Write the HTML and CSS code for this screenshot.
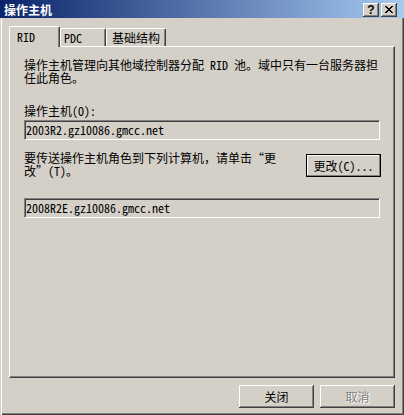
FILE: index.html
```html
<!DOCTYPE html>
<html lang="zh-CN">
<head>
    <meta charset="UTF-8">
    <title>操作主机</title>
    <link rel="stylesheet" href="styles.css">
</head>
<body>
    <div class="window">
        <div class="titlebar">
            <span class="title">操作主机</span>
            <div class="caption-buttons">
                <span class="cap-btn help">?</span>
                <span class="cap-btn close">
                    <svg width="8" height="7" viewBox="0 0 8 7">
                        <path d="M0 0h2v1h1v1h2v-1h1v-1h2v1h-1v1h-1v1h-1v1h1v1h1v1h1v1h-2v-1h-1v-1h-2v1h-1v1h-2v-1h1v-1h1v-1h1v-1h-1v-1h-1z" fill="#000"/>
                    </svg>
                </span>
            </div>
        </div>

        <div class="client">
            <div class="tabs">
                <div class="tab tab-rid active">RID</div>
                <div class="tab tab-pdc">PDC</div>
                <div class="tab tab-infra">基础结构</div>
            </div>

            <div class="panel">
                <p class="desc">操作主机管理向其他域控制器分配 RID 池。域中只有一台服务器担<br>任此角色。</p>

                <div class="label">操作主机(O):</div>
                <div class="field">2003R2.gz10086.gmcc.net</div>

                <div class="transfer">
                    <p class="desc">要传送操作主机角色到下列计算机，请单击“更<br>改”(T)。</p>
                    <button class="btn default">更改(C)...</button>
                </div>

                <div class="field field-target">2008R2E.gz10086.gmcc.net</div>
            </div>

            <div class="footer">
                <button class="btn">关闭</button>
                <button class="btn" disabled>取消</button>
            </div>
        </div>
    </div>
</body>
</html>
```

FILE: styles.css
```css
body {
    margin: 0;
    background: #d4d0c8;
    font-family: "Noto Sans Mono CJK SC", "Noto Sans CJK SC", sans-serif;
    font-size: 12px;
    color: #000;
}

.window {
    width: 404px;
    height: 415px;
    box-sizing: border-box;
    background: #d4d0c8;
    box-shadow: inset 1px 0 0 #d4d0c8, inset 2px 0 0 #fff,
                inset -1px -1px 0 #404040, inset -2px -2px 0 #808080;
    display: flex;
    flex-direction: column;
}

/* barra de título */
.titlebar {
    height: 18px;
    background: linear-gradient(to right, #0a246a, #a6caf0);
    display: flex;
    justify-content: space-between;
    padding: 0 7px 0 4px;
}

.title {
    color: #fff;
    font-weight: bold;
    line-height: 19px;
}

.caption-buttons {
    display: flex;
    gap: 2px;
    margin-top: 3px;
}

.cap-btn {
    width: 16px;
    height: 14px;
    box-sizing: border-box;
    background: #d4d0c8;
    box-shadow: inset -1px -1px 0 #404040, inset 1px 1px 0 #fff, inset -2px -2px 0 #808080;
    display: flex;
    align-items: center;
    justify-content: center;
}

.cap-btn.help {
    font-family: "Liberation Sans", sans-serif;
    font-weight: bold;
    font-size: 12px;
    line-height: 12px;
    padding-bottom: 1px;
}

.cap-btn.close svg {
    margin-bottom: 1px;
}

/* área cliente */
.client {
    flex: 1;
    padding: 8px 0 0 9px;
    display: flex;
    flex-direction: column;
}

.tabs {
    display: flex;
    align-items: flex-end;
    height: 20px;
}

.tab {
    box-sizing: border-box;
    height: 18px;
    padding-top: 2px;
    line-height: 13px;
    border-top: 1px solid #fff;
    border-left: 1px solid #fff;
    border-right: 1px solid #404040;
    border-radius: 2px 2px 0 0;
    box-shadow: inset -1px 0 0 #808080;
    background: #d4d0c8;
}

.tab.active {
    height: 21px;
    margin-bottom: -1px;
    padding-top: 3px;
    position: relative;
    z-index: 1;
}

.tab-rid {
    width: 51px;
    padding-left: 7px;
}

.tab-pdc {
    width: 46px;
    padding-left: 3px;
}

.tab-infra {
    width: 60px;
    padding-left: 5px;
}

.panel {
    width: 386px;
    height: 332px;
    box-sizing: border-box;
    padding: 11px 0 0 14px;
    border-top: 1px solid #fff;
    border-left: 1px solid #fff;
    border-right: 1px solid #404040;
    border-bottom: 1px solid #404040;
    box-shadow: inset -1px -1px 0 #808080;
}

.desc {
    margin: 0;
    line-height: 13px;
}

.label {
    margin-top: 20px;
    line-height: 13px;
}

.field {
    margin-top: 3px;
    width: 356px;
    height: 20px;
    box-sizing: border-box;
    padding-left: 1px;
    line-height: 16px;
    border-top: 1px solid #808080;
    border-left: 1px solid #808080;
    border-bottom: 1px solid #fff;
    border-right: 1px solid #fff;
    box-shadow: inset 1px 1px 0 #404040, inset -1px -1px 0 #d4d0c8;
    padding-top: 1px;
}

.field-target {
    margin-top: 21px;
}

.transfer {
    margin-top: 11px;
    width: 357px;
    display: flex;
    justify-content: space-between;
    align-items: flex-start;
}

.btn {
    width: 75px;
    height: 23px;
    padding: 0;
    border: none;
    background: #d4d0c8;
    font-family: inherit;
    font-size: 12px;
    color: #000;
    box-shadow: inset -1px -1px 0 #404040, inset 1px 1px 0 #fff,
                inset -2px -2px 0 #808080, inset 2px 2px 0 #d4d0c8;
}

.btn.default {
    margin-top: 3px;
    border: 1px solid #000;
    box-shadow: inset -1px -1px 0 #808080, inset 1px 1px 0 #fff;
}

.btn:disabled {
    color: #808080;
    text-shadow: 1px 1px 0 #fff;
}

.footer {
    width: 386px;
    margin-top: 7px;
    display: flex;
    justify-content: flex-end;
    gap: 6px;
}
```
